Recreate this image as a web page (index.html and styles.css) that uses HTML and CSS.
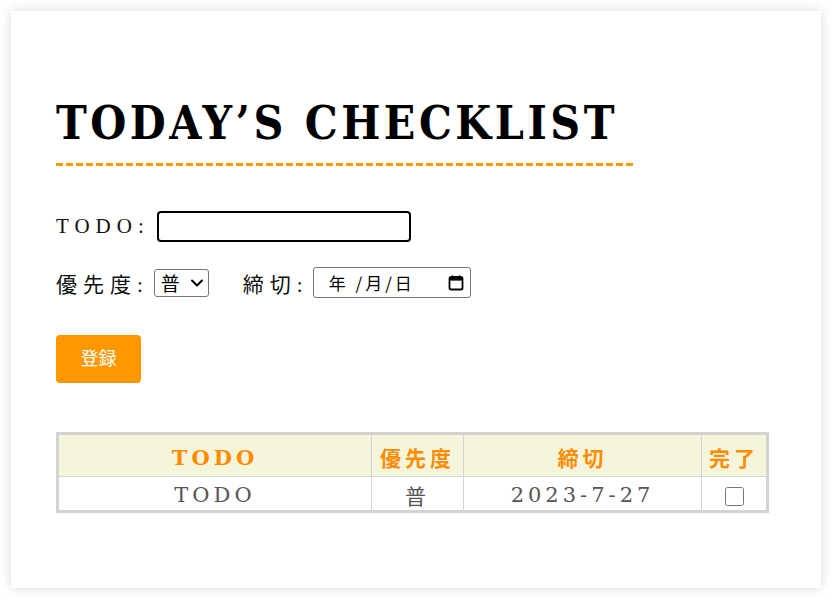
FILE: index.html
```html
<!DOCTYPE html>
<html lang="ja">
<head>
<meta charset="utf-8">
<title>Today's Checklist</title>
<link rel="stylesheet" href="styles.css">
</head>
<body>
<div class="card">
  <h1 class="title">TODAY’S CHECKLIST</h1>
  <div class="form">
    <div class="row">
      <label class="label" for="todo">TODO:</label>
      <input id="todo" class="text-input" type="text" autofocus>
    </div>
    <div class="row">
      <label class="label label-prio" for="prio">優先度:</label>
      <span class="select-wrap">
        <select id="prio" class="select"><option>普</option></select>
        <svg class="chev" width="14" height="10" viewBox="0 0 14 10" aria-hidden="true">
          <path d="M2 2.5l5 5 5-5" stroke="#000" stroke-width="2" fill="none" stroke-linecap="round" stroke-linejoin="round"/>
        </svg>
      </span>
      <span class="label label-due">締切:</span>
      <div class="date-field">
        <span class="date-text">年 /月/日</span>
        <svg class="cal-icon" width="18" height="18" viewBox="0 0 18 18" aria-hidden="true">
          <rect x="2.5" y="3" width="13" height="12.5" rx="1.6" fill="none" stroke="#000" stroke-width="1.8"/>
          <rect x="2.5" y="3" width="13" height="3.6" fill="#000"/>
          <path d="M5.5 1.5v2.5M12.5 1.5v2.5" stroke="#000" stroke-width="1.8"/>
        </svg>
      </div>
    </div>
    <button class="btn" type="button">登録</button>
  </div>
  <table class="list">
    <thead>
      <tr><th class="c-todo">TODO</th><th class="c-prio">優先度</th><th class="c-date">締切</th><th class="c-done">完了</th></tr>
    </thead>
    <tbody>
      <tr><td>TODO</td><td>普</td><td>2023-7-27</td><td><input type="checkbox" class="check"></td></tr>
    </tbody>
  </table>
</div>
</body>
</html>
```
FILE: styles.css
```css
html, body {
  margin: 0;
  padding: 0;
  background: #ffffff;
}
body {
  padding: 11px 13px 13px 11px;
}
.card {
  background: #fff;
  box-shadow: 0 0 10px rgba(0, 0, 0, 0.16);
  min-height: 577px;
  box-sizing: border-box;
  padding: 85px 45px 40px 45px;
}
.title {
  display: inline-block;
  margin: 0;
  font-family: "DejaVu Serif", serif;
  font-stretch: condensed;
  font-weight: bold;
  font-size: 46px;
  line-height: 54px;
  letter-spacing: 3.5px;
  padding-right: 17px;
  padding-bottom: 16px;
  background: repeating-linear-gradient(to right, #ff9800 0 7px, transparent 7px 10px) left bottom / 100% 3px no-repeat;
  color: #000;
}
.form {
  margin-top: 45px;
  display: flex;
  flex-direction: column;
  align-items: flex-start;
}
.row {
  display: flex;
  align-items: center;
  height: 31px;
  margin-bottom: 25px;
}
.row + .row {
  margin-bottom: 37px;
}
.label {
  font-family: "Liberation Serif", "Noto Sans CJK JP", serif;
  font-size: 21px;
  letter-spacing: 6px;
  color: #111;
  margin-right: 7px;
}
.label-prio {
  margin-right: 5px;
}
.label-due {
  margin-left: 34px;
  margin-right: 4px;
}
.text-input {
  width: 254px;
  height: 31px;
  box-sizing: border-box;
  border: 2px solid #000;
  border-radius: 4px;
  outline: none;
  font-size: 16px;
  padding: 0 4px;
}
.select-wrap {
  position: relative;
  display: inline-block;
  height: 28px;
}
.select {
  -webkit-appearance: none;
  appearance: none;
  height: 28px;
  width: 55px;
  box-sizing: border-box;
  font-family: "Noto Sans CJK JP", sans-serif;
  font-size: 19px;
  line-height: 26px;
  border: 1px solid #767676;
  border-radius: 3px;
  background: #fff;
  color: #000;
  padding: 0 0 0 6px;
  margin: 0;
}
.chev {
  position: absolute;
  right: 5px;
  top: 9px;
  pointer-events: none;
}
.date-field {
  width: 158px;
  height: 31px;
  box-sizing: border-box;
  border: 1px solid #767676;
  border-radius: 3px;
  display: flex;
  align-items: center;
  justify-content: space-between;
  padding: 0 5px 0 15px;
}
.date-text {
  font-family: "Noto Sans CJK JP", sans-serif;
  font-size: 17px;
  letter-spacing: 3px;
  color: #000;
  white-space: pre;
}
.cal-icon {
  display: block;
}
.btn {
  width: 85px;
  height: 48px;
  border: none;
  border-radius: 4px;
  background: #ff9800;
  color: #fff;
  font-family: "Noto Sans CJK JP", sans-serif;
  font-size: 18px;
  padding: 0 0 4px 0;
}
.list {
  margin-top: 49px;
  width: 713px;
  border-collapse: collapse;
  border: 3px solid #d3d3d3;
}
.list th, .list td {
  border: 1px solid #d3d3d3;
  text-align: center;
  padding: 3px 0 0 0;
}
.list th {
  background: #f5f5dc;
  color: #ff8c00;
  height: 38px;
  font-family: "DejaVu Serif", "Noto Sans CJK JP", serif;
  font-weight: bold;
  font-size: 21px;
  letter-spacing: 4px;
}
.list td {
  height: 29px;
  color: #555;
  font-family: "DejaVu Serif", "Noto Sans CJK JP", serif;
  font-size: 21px;
  letter-spacing: 4px;
}
.c-todo { width: 312px; }
.c-prio { width: 91px; }
.c-date { width: 237px; }
.check {
  width: 19px;
  height: 19px;
  margin: 0;
  vertical-align: middle;
}
```
